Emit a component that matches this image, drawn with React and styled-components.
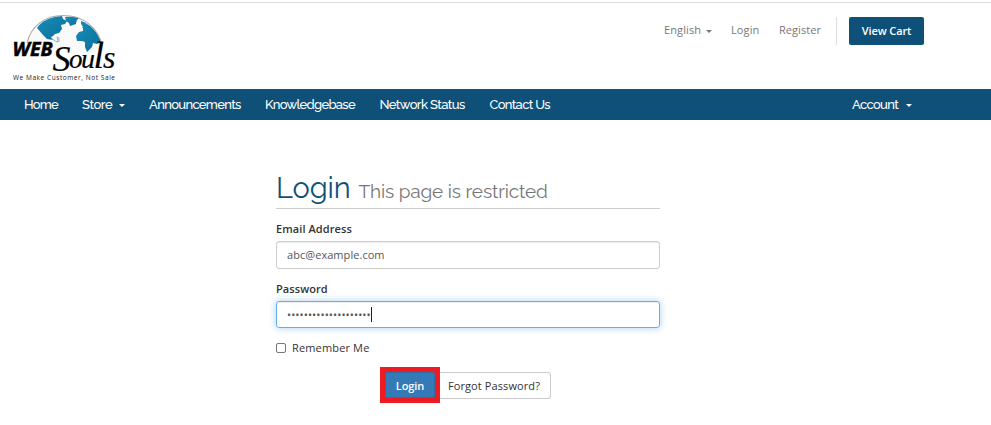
import React from "react";
import styled, { createGlobalStyle } from "styled-components";

const GlobalStyle = createGlobalStyle`
	* {
		box-sizing: border-box;
	}

	body {
		margin: 0;
		background-color: #fff;
		font-family: "Open Sans", sans-serif;
		font-size: 11px;
		line-height: 16px;
		color: #333;
	}
`;

const Page = styled.div`
	height: 425px;
	overflow: hidden;
	padding-top: 2px;
`;

const Header = styled.header`
	display: flex;
	justify-content: space-between;
	align-items: flex-start;
	height: 87px;
	padding: 0 67px 0 10px;
	border-top: 1px solid #ddd;
`;

const Logo = styled.svg`
	display: block;
	margin-top: 9px;
`;

const TopNav = styled.ul`
	display: flex;
	margin: 14px 0 0;
	padding: 0;
	list-style: none;
`;

const TopNavItem = styled.li`
	width: ${(props) => props.$width}px;
	padding-top: 5px;
	color: #777;
	letter-spacing: ${(props) => props.$spacing || 0}px;
	white-space: nowrap;
`;

const CartItem = styled.li`
	height: 28px;
	padding-left: 12px;
	border-left: 1px solid #ddd;
`;

const CartButton = styled.button`
	display: block;
	width: 75px;
	height: 28px;
	padding: 0;
	border: 0;
	border-radius: 2px;
	background-color: #0f5078;
	color: #fff;
	font: 600 11px/28px "Open Sans", sans-serif;
	letter-spacing: -0.1px;
`;

const Caret = styled.span`
	display: inline-block;
	margin-left: ${(props) => props.$gap}px;
	vertical-align: middle;
	border-top: 3px solid;
	border-left: 3px solid transparent;
	border-right: 3px solid transparent;
`;

const MainNav = styled.nav`
	display: flex;
	height: 31px;
	padding-left: 24px;
	background-color: #0f5078;
	color: #fff;
	font: 500 13px/31px Raleway, Lato, sans-serif;
`;

const MainNavItem = styled.div`
	width: ${(props) => props.$width}px;
	letter-spacing: ${(props) => props.$spacing}px;
	white-space: nowrap;
`;

const AccountItem = styled(MainNavItem)`
	margin-left: auto;
`;

const LoginPanel = styled.main`
	width: 384px;
	margin: 51px 0 0 276px;
`;

const PageHeading = styled.h1`
	display: flex;
	align-items: baseline;
	height: 38px;
	margin: 0 0 12px;
	border-bottom: 1px solid #ccc;
	color: #0f5078;
	font: 400 29px/34px Raleway, Lato, sans-serif;
	letter-spacing: -0.1px;
	white-space: nowrap;
`;

const SubHeading = styled.small`
	margin-left: 8px;
	color: #777;
	font-size: 19px;
	letter-spacing: -0.13px;
`;

const FormGroup = styled.div`
	margin-bottom: 12px;
`;

const Label = styled.div`
	margin-bottom: 4px;
	font-weight: 600;
	letter-spacing: 0.08px;
`;

const Field = styled.div`
	display: flex;
	align-items: center;
	height: ${(props) => (props.$focused ? 27 : 28)}px;
	padding: 0 10px;
	border: 1px solid ${(props) => (props.$focused ? "#66afe9" : "#ccc")};
	border-radius: 3px;
	box-shadow: ${(props) =>
		props.$focused
			? "inset 0 1px 1px rgba(0,0,0,.075), 0 0 7px rgba(102,175,233,.6)"
			: "inset 0 1px 1px rgba(0,0,0,.075)"};
	color: #555;
	letter-spacing: 0.05px;
`;

const TextCursor = styled.span`
	width: 1px;
	height: 15px;
	background-color: #222;
`;

const RememberMe = styled.label`
	display: flex;
	align-items: center;
	gap: 6px;
	height: 16px;
	letter-spacing: 0.15px;
`;

const Checkbox = styled.span`
	width: 10px;
	height: 10px;
	border: 1px solid #767676;
	border-radius: 2px;
`;

const Actions = styled.div`
	display: flex;
	align-items: center;
	margin: 11px 0 0 104px;
`;

const Highlight = styled.div`
	padding: 5px;
	background-color: #ed1c24;
`;

const LoginButton = styled.button`
	display: block;
	width: 50px;
	height: 26px;
	padding: 1px 0 0;
	border: 1px solid #2e6da4;
	border-radius: 2px;
	background-color: #337ab7;
	color: #fff;
	font: 600 11px/23px "Open Sans", sans-serif;
	letter-spacing: -0.1px;
`;

const ForgotButton = styled.button`
	width: 111px;
	height: 27px;
	padding: 0 2px 0 0;
	border: 1px solid #ccc;
	border-left: 0;
	border-radius: 0 3px 3px 0;
	background-color: #fff;
	color: #333;
	font: 11px/25px "Open Sans", sans-serif;
	letter-spacing: 0.1px;
`;

const navItems = [
	{ label: "Home", width: 58, spacing: -0.8 },
	{ label: "Store", width: 67, spacing: -0.4, caret: true },
	{ label: "Announcements", width: 116, spacing: -0.67 },
	{ label: "Knowledgebase", width: 114.5, spacing: -0.7 },
	{ label: "Network Status", width: 110, spacing: -0.6 },
	{ label: "Contact Us", width: 62, spacing: -0.68 },
];

function WebSoulsLogo() {
	return (
		<Logo width="110" height="72" viewBox="10 12 110 72">
			<defs>
				<linearGradient id="ocean" x1="0" y1="0" x2="1" y2="1">
					<stop offset="0" stopColor="#1a8cb8" />
					<stop offset="1" stopColor="#08709a" />
				</linearGradient>
			</defs>
			<path d="M27 43C31 26 45 15.500 63 15.500C84 15.500 98 28 101 45L96 52H52Z" fill="#fafafa" />
			<path d="M37 28C41 22 48 17 62 16L63 19L67 21L65 24L61 25L62 29L59 33L55 34L53 36L51 37L53 40L47 39L43 35Z" fill="url(#ocean)" />
			<path d="M51 38L55 41L58 42L57 37L59 38L59 42" fill="none" stroke="#6fa9c2" strokeWidth=".8" />
			<path d="M65 17L74 16.500L79 18L77 20L76 24L73 25L70 26L69 23L66 21Z" fill="url(#ocean)" />
			<path d="M81 21C90 24 98 32 101 42L97 44L93 43L92 47L87 52L85 47L85 42L82 41L77 41L76 36L79 32L83 31L83 28L79 26Z" fill="url(#ocean)" />
			<path d="M77 20L81 21L81 24L83 27L79 29L76 25Z" fill="#fff" />
			<path d="M27 43C31 26 45 15.500 63 15.500C84 15.500 98 28 102 45" fill="none" stroke="#aaa" strokeWidth="1.100" />
			<text x="12.500" y="55.500" textLength="40" lengthAdjust="spacingAndGlyphs" fontFamily="Open Sans, sans-serif" fontWeight="700" fontStyle="italic" fontSize="19" stroke="#000" strokeWidth=".5">WEB</text>
			<text y="68" fontFamily="Liberation Serif, serif" fontStyle="italic" stroke="#000" strokeWidth=".2">
				<tspan x="52.500" y="70.500" fontSize="36">S</tspan>
				<tspan x="69" y="67.500" fontSize="27">o</tspan>
				<tspan x="81" fontSize="28">u</tspan>
				<tspan x="93.500" fontSize="38">l</tspan>
				<tspan x="103" fontSize="32">s</tspan>
			</text>
			<text x="13" y="79.500" textLength="102" fontFamily="Open Sans, sans-serif" fontSize="6.500" fill="#222">We Make Customer, Not Sale</text>
		</Logo>
	);
}

export default function App() {
	return (
		<Page>
			<GlobalStyle />
			<Header>
				<WebSoulsLogo />
				<TopNav>
					<TopNavItem $width={67} $spacing={0.1}>
						English
						<Caret $gap={5} />
					</TopNavItem>
					<TopNavItem $width={48} $spacing={0.1}>Login</TopNavItem>
					<TopNavItem $width={57} $spacing={0.05}>Register</TopNavItem>
					<CartItem>
						<CartButton>View Cart</CartButton>
					</CartItem>
				</TopNav>
			</Header>
			<MainNav>
				{navItems.map((item) => (
					<MainNavItem key={item.label} $width={item.width} $spacing={item.spacing}>
						{item.label}
						{item.caret && <Caret $gap={7} />}
					</MainNavItem>
				))}
				<AccountItem $width={139} $spacing={-0.65}>
					Account
					<Caret $gap={8} />
				</AccountItem>
			</MainNav>
			<LoginPanel>
				<PageHeading>
					Login
					<SubHeading>This page is restricted</SubHeading>
				</PageHeading>
				<FormGroup>
					<Label>Email Address</Label>
					<Field>abc@example.com</Field>
				</FormGroup>
				<FormGroup>
					<Label>Password</Label>
					<Field $focused>
						{"•".repeat(20)}
						<TextCursor />
					</Field>
				</FormGroup>
				<RememberMe>
					<Checkbox />
					Remember Me
				</RememberMe>
				<Actions>
					<Highlight>
						<LoginButton>Login</LoginButton>
					</Highlight>
					<ForgotButton>Forgot Password?</ForgotButton>
				</Actions>
			</LoginPanel>
		</Page>
	);
}
